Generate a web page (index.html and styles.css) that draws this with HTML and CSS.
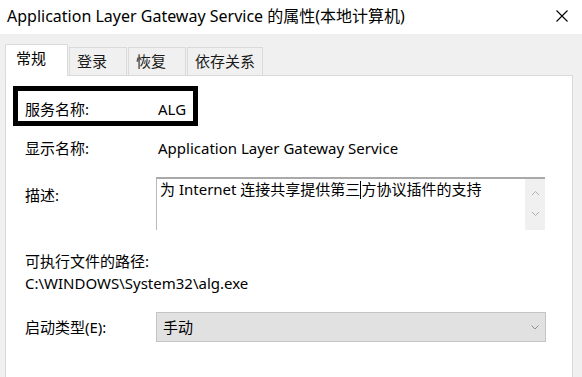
FILE: index.html
```html
<!DOCTYPE html>
<html lang="zh-CN">
<head>
<meta charset="utf-8">
<title>ALG 属性</title>
<link rel="stylesheet" href="styles.css">
</head>
<body>
<div class="window">
  <div class="titlebar">
    <span class="title">Application Layer Gateway Service 的属性(本地计算机)</span>
    <svg class="close" width="12" height="12" viewBox="0 0 12 12"><path d="M0.5 0.5 L11.5 11.5 M11.5 0.5 L0.5 11.5" stroke="#000" stroke-width="1.1" fill="none"/></svg>
  </div>
  <div class="dialog">
    <div class="tabs">
      <div class="tab active">常规</div>
      <div class="tab">登录</div>
      <div class="tab">恢复</div>
      <div class="tab">依存关系</div>
    </div>
    <div class="panel">
      <div class="row highlight">
        <span class="label">服务名称:</span>
        <span class="value">ALG</span>
      </div>
      <div class="row display">
        <span class="label">显示名称:</span>
        <span class="value">Application Layer Gateway Service</span>
      </div>
      <div class="row desc">
        <span class="label desc-label">描述:</span>
        <div class="textarea">
          <div class="ta-text">为 Internet 连接共享提供第三<span class="caret"></span>方协议插件的支持</div>
          <div class="scroll">
            <svg width="9" height="6" viewBox="0 0 9 6"><path d="M1 5 L4.5 1.5 L8 5" stroke="#b0b0b0" stroke-width="1" fill="none"/></svg>
            <svg width="9" height="6" viewBox="0 0 9 6"><path d="M1 1 L4.5 4.5 L8 1" stroke="#b0b0b0" stroke-width="1" fill="none"/></svg>
          </div>
        </div>
      </div>
      <div class="path-label">可执行文件的路径:</div>
      <div class="path-value">C:\WINDOWS\System32\alg.exe</div>
      <div class="row startup">
        <span class="label">启动类型(E):</span>
        <div class="select">
          <span>手动</span>
          <svg width="8" height="5" viewBox="0 0 8 5"><path d="M0.5 0.5 L4 4 L7.5 0.5" stroke="#909090" stroke-width="1" fill="none"/></svg>
        </div>
      </div>
    </div>
  </div>
</div>
</body>
</html>
```

FILE: styles.css
```css
* { box-sizing: border-box; }
html, body {
  margin: 0;
  padding: 0;
  width: 582px;
  height: 377px;
  overflow: hidden;
}
body {
  font-family: "Noto Sans", "Noto Sans CJK SC", sans-serif;
  font-size: 15px;
  color: #000;
  background: #f0f0f0;
}
.window {
  display: flex;
  flex-direction: column;
  height: 377px;
}
.titlebar {
  height: 34px;
  background: #fff;
  display: flex;
  align-items: center;
  justify-content: space-between;
  padding: 0 14px 0 7px;
}
.title {
  font-size: 16px;
  line-height: 20px;
  margin-top: -3px;
}
.close {
  margin-top: -3px;
}
.dialog {
  flex: 1;
  display: flex;
  flex-direction: column;
  padding: 10px 9px 0 5px;
}
.tabs {
  display: flex;
  align-items: flex-end;
  height: 31px;
  gap: 1px;
}
.tab {
  height: 28px;
  min-width: 58px;
  padding: 0 7px;
  line-height: 26px;
  border: 1px solid #dadada;
  border-bottom: none;
  background: #f0f0f0;
  color: #1a1a1a;
}
.tab.active {
  height: 32px;
  width: 63px;
  padding: 2px 10px 0;
  line-height: 22px;
  background: #fff;
  position: relative;
  z-index: 1;
  margin-bottom: -1px;
  color: #000;
}
.panel {
  flex: 1;
  background: #fff;
  border: 1px solid #d9d9d9;
  border-bottom: none;
  padding: 10px 0 0 7px;
  display: flex;
  flex-direction: column;
  align-items: flex-start;
}
.row {
  display: flex;
  align-items: flex-start;
  line-height: 20px;
}
.label {
  width: 133px;
  flex: none;
}
.highlight {
  border: 5px solid #000;
  height: 40px;
  padding: 8px 7px 0 7px;
  width: 185px;
}
.display {
  margin-top: 12px;
  padding-left: 12px;
}
.desc {
  margin-top: 19px;
  padding-left: 12px;
}
.desc-label {
  padding-top: 8px;
  width: 131px;
}
.textarea {
  width: 389px;
  height: 53px;
  border-top: 2px solid #a9a9a9;
  border-left: 1px solid #b9b9b9;
  display: flex;
  justify-content: space-between;
}
.ta-text {
  padding: 0 0 0 3px;
  line-height: 20px;
}
.caret {
  display: inline-block;
  width: 1px;
  height: 18px;
  background: #000;
  vertical-align: -4px;
}
.scroll {
  width: 20px;
  height: 51px;
  background: #f0f0f0;
  display: flex;
  flex-direction: column;
  align-items: center;
  justify-content: space-around;
  padding: 4px 0 6px;
}
.path-label {
  margin-top: 21px;
  padding-left: 12px;
  line-height: 20px;
}
.path-value {
  margin-top: 2px;
  padding-left: 12px;
  line-height: 20px;
}
.startup {
  margin-top: 19px;
  padding-left: 12px;
  align-items: center;
}
.startup .label {
  width: 131px;
}
.select {
  width: 390px;
  height: 30px;
  background: #e1e1e1;
  border: 1px solid #c4c4c4;
  display: flex;
  align-items: center;
  justify-content: space-between;
  padding: 0 6px 0 6px;
}
```
